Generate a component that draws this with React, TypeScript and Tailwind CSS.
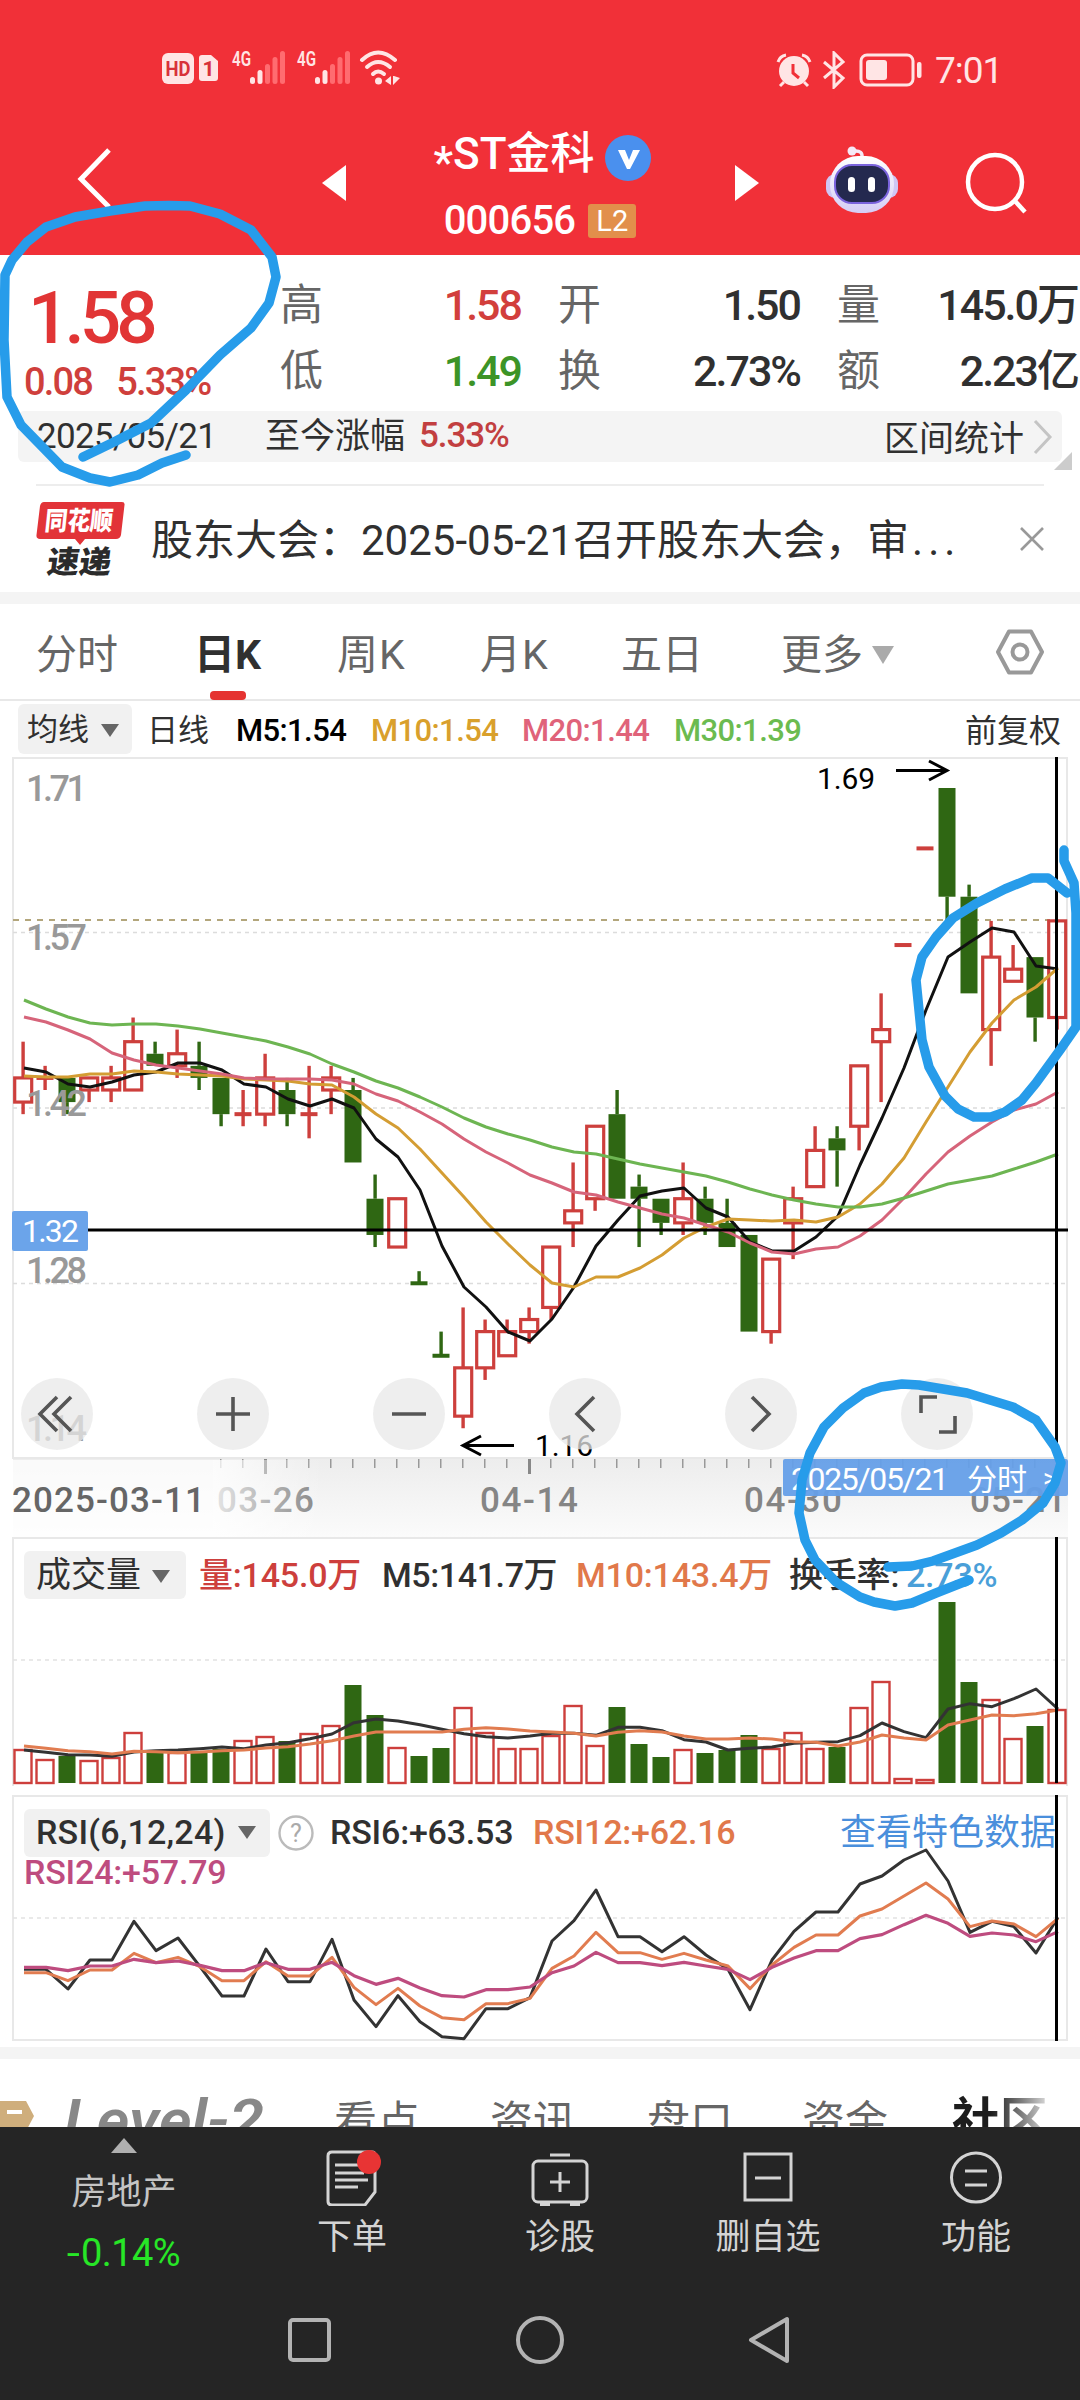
import React from "react";

const RED = "#cd3f3c";
const GREEN = "#2f6713";

const xAt = (i: number) => 23 + 22 * i;
const yAt = (cents: number) => 788 + (169 - cents) * 12.08;

/* [color, body top, body bottom, high, low] in cents */
const CANDLES: [string, number, number, number, number][] = [
  ["r", 145, 143, 148, 142],
  ["r", 145, 145, 146, 144],
  ["g", 145, 143, 145, 142],
  ["r", 145, 144, 145, 143],
  ["r", 145, 144, 146, 143],
  ["r", 148, 144, 150, 144],
  ["g", 147, 146, 148, 146],
  ["r", 147, 146, 149, 145],
  ["g", 146, 145, 148, 144],
  ["g", 145, 142, 145, 141],
  ["r", 142, 142, 144, 141],
  ["r", 145, 142, 147, 141],
  ["g", 144, 142, 145, 141],
  ["r", 142, 142, 146, 140],
  ["r", 145, 144, 146, 142],
  ["g", 144, 138, 145, 138],
  ["g", 135, 132, 137, 131],
  ["r", 135, 131, 135, 131],
  ["g", 128, 128, 129, 128],
  ["g", 122, 122, 124, 122],
  ["r", 121, 117, 126, 116],
  ["r", 124, 121, 125, 120],
  ["r", 124, 122, 125, 122],
  ["r", 125, 124, 126, 123],
  ["r", 131, 126, 131, 125],
  ["r", 134, 133, 138, 131],
  ["r", 141, 135, 141, 134],
  ["g", 142, 135, 144, 135],
  ["g", 136, 135, 137, 131],
  ["g", 135, 133, 135, 132],
  ["r", 135, 133, 138, 132],
  ["g", 135, 133, 136, 132],
  ["g", 133, 131, 135, 131],
  ["g", 132, 124, 132, 124],
  ["r", 130, 124, 130, 123],
  ["r", 135, 133, 136, 130],
  ["r", 139, 136, 141, 136],
  ["g", 140, 139, 141, 136],
  ["r", 146, 141, 146, 139],
  ["r", 149, 148, 152, 143],
  ["r", 156, 156, 156, 156],
  ["r", 164, 164, 164, 164],
  ["g", 169, 160, 169, 158],
  ["g", 160, 152, 161, 152],
  ["r", 155, 149, 158, 146],
  ["r", 154, 153, 156, 153],
  ["g", 155, 150, 155, 148],
  ["r", 158, 150, 158, 149],
];

const M5 = [1068, 1072, 1084, 1087, 1082, 1075, 1072, 1063, 1063, 1070, 1084, 1087, 1099, 1106, 1099, 1108, 1139, 1157, 1190, 1246, 1287, 1307, 1332, 1341, 1319, 1287, 1246, 1220, 1196, 1191, 1188, 1208, 1217, 1242, 1251, 1251, 1237, 1216, 1165, 1118, 1068, 1010, 957, 942, 928, 932, 966, 969];
const M10 = [1076, 1077, 1077, 1074, 1074, 1071, 1072, 1074, 1075, 1076, 1079, 1080, 1081, 1084, 1085, 1097, 1114, 1128, 1149, 1173, 1197, 1222, 1244, 1265, 1283, 1287, 1277, 1277, 1268, 1255, 1238, 1227, 1219, 1220, 1221, 1220, 1222, 1217, 1204, 1184, 1158, 1122, 1087, 1052, 1023, 1000, 987, 968];
const M20 = [1017, 1022, 1030, 1039, 1053, 1060, 1065, 1068, 1071, 1074, 1078, 1079, 1079, 1079, 1080, 1084, 1094, 1101, 1112, 1124, 1139, 1152, 1163, 1175, 1183, 1192, 1195, 1202, 1208, 1214, 1218, 1225, 1232, 1243, 1252, 1254, 1249, 1247, 1236, 1220, 1198, 1174, 1152, 1136, 1122, 1110, 1104, 1092];
const M30 = [1000, 1009, 1017, 1023, 1025, 1024, 1024, 1026, 1029, 1033, 1037, 1041, 1047, 1054, 1064, 1072, 1081, 1088, 1097, 1107, 1118, 1127, 1134, 1140, 1147, 1152, 1154, 1159, 1164, 1168, 1172, 1176, 1182, 1189, 1195, 1200, 1204, 1207, 1207, 1204, 1198, 1191, 1184, 1180, 1176, 1169, 1162, 1154];

const VOL = [1749, 1759, 1756, 1760, 1757, 1732, 1753, 1752, 1752, 1749, 1740, 1736, 1741, 1733, 1725, 1685, 1715, 1747, 1756, 1748, 1707, 1732, 1748, 1748, 1735, 1705, 1745, 1707, 1744, 1757, 1749, 1753, 1750, 1735, 1748, 1732, 1748, 1747, 1707, 1681, 1778, 1779, 1602, 1682, 1699, 1738, 1726, 1709];
const V5 = [690, 697, 704, 705, 709, 696, 692, 690, 686, 681, 686, 675, 668, 656, 642, 608, 597, 603, 614, 628, 641, 650, 654, 648, 640, 640, 646, 622, 622, 632, 659, 666, 690, 685, 681, 670, 667, 665, 647, 609, 635, 653, 567, 551, 560, 536, 507, 567].map((v) => 1520 + v / 3);
const V10 = [678, 685, 692, 695, 702, 694, 695, 698, 696, 692, 690, 684, 680, 672, 662, 648, 636, 636, 636, 636, 628, 623, 627, 633, 636, 640, 648, 637, 632, 636, 648, 657, 657, 654, 657, 665, 667, 678, 666, 645, 654, 660, 615, 600, 585, 587, 581, 570].map((v) => 1520 + v / 3);

const RSI6 = [568, 568, 627, 540, 540, 424, 512, 474, 560, 648, 648, 507, 605, 605, 478, 660, 740, 647, 725, 770, 776, 686, 686, 653, 483, 422, 330, 470, 470, 515, 470, 525, 568, 689, 540, 454, 396, 396, 312, 288, 240, 210, 303, 457, 424, 440, 519, 412].map((v) => 1780 + v / 3);
const RSI12 = [578, 578, 602, 570, 570, 520, 548, 532, 560, 602, 602, 545, 588, 588, 532, 622, 674, 625, 678, 713, 719, 671, 671, 655, 565, 528, 457, 518, 518, 538, 520, 540, 558, 626, 555, 502, 465, 465, 408, 387, 348, 309, 357, 440, 423, 432, 470, 415].map((v) => 1780 + v / 3);
const RSI24 = [562, 562, 572, 558, 558, 538, 548, 543, 556, 572, 572, 548, 568, 568, 547, 587, 613, 595, 624, 647, 651, 629, 629, 621, 578, 558, 517, 548, 548, 557, 547, 558, 568, 599, 562, 534, 512, 512, 476, 464, 434, 406, 430, 469, 459, 465, 485, 455].map((v) => 1780 + v / 3);

const Line = ({ data, color, width = 3 }: { data: number[]; color: string; width?: number }) => (
  <polyline
    points={data.map((y, i) => `${xAt(i) + 1},${y}`).join(" ")}
    fill="none"
    stroke={color}
    strokeWidth={width}
    strokeLinejoin="round"
  />
);

const Caret = ({ w = 18, h = 13, color = "#666" }: { w?: number; h?: number; color?: string }) => (
  <svg width={w} height={h} viewBox="0 0 18 13" preserveAspectRatio="none" className="shrink-0">
    <path d="M0 0H18L9 13Z" fill={color} />
  </svg>
);

/* --------------------------------------
   Status bar + title
---------------------------------------*/
const Signal = () => (
  <svg width="54" height="36" viewBox="0 0 54 36" className="shrink-0 overflow-visible">
    <text x="0" y="16" fontSize="21" fontWeight="600" textLength="19" lengthAdjust="spacingAndGlyphs" fill="#ffe5e5">
      4G
    </text>
    <rect x="18" y="27" width="5" height="7" rx="2.5" fill="#ffe5e5" />
    <rect x="25.5" y="20" width="5" height="14" rx="2.5" fill="#ffe5e5" />
    <rect x="33" y="14" width="5" height="20" rx="2.5" fill="#ff6c70" />
    <rect x="40.5" y="7" width="5" height="27" rx="2.5" fill="#ff6c70" />
    <rect x="48" y="1" width="5" height="33" rx="2.5" fill="#ff6c70" />
  </svg>
);

const StatusBar = () => (
  <div className="h-[135px] pl-[162px] pt-[50px] flex items-start">
    <svg width="60" height="36" viewBox="0 0 60 36" className="shrink-0">
      <rect x="0" y="3" width="32" height="31" rx="6" fill="#ffe5e5" />
      <text x="3.5" y="26" fontSize="21" fontWeight="700" textLength="25" lengthAdjust="spacingAndGlyphs" fill="#d8323a">
        HD
      </text>
      <path d="M40 5H49L56 11V28Q56 31 53 31H40Q37 31 37 28V8Q37 5 40 5Z" fill="#ffe5e5" />
      <text x="40.5" y="26" fontSize="21" fontWeight="700" fill="#d8323a">
        1
      </text>
    </svg>
    <div className="ml-[10px] flex gap-[11px]">
      <Signal />
      <Signal />
    </div>
    <svg width="44" height="36" viewBox="0 0 44 36" className="ml-[8px] shrink-0" fill="none" stroke="#ffe5e5" strokeWidth="4" strokeLinecap="round">
      <path d="M3 10Q19 -5 36 10" />
      <path d="M8 17Q19 7 31 17" />
      <path d="M14 24Q19 19 25 24" />
      <circle cx="19.5" cy="31" r="3.5" fill="#ffe5e5" stroke="none" />
      <path d="M32 26V35L26 31ZM34 26H35L41 28L34 35Z" fill="#ffe5e5" stroke="none" />
    </svg>
    <div className="ml-auto mr-[79px] flex items-center">
      <svg width="36" height="36" viewBox="0 0 36 36" fill="none" stroke="#ffe5e5" strokeWidth="3">
        <circle cx="18" cy="19" r="15" fill="#ffe5e5" stroke="none" />
        <path d="M2 10Q4 4 10 3M34 10Q32 4 26 3M8 30L4 34M28 30L32 34" />
        <path d="M17 12V21L23 26" stroke="#f13038" />
      </svg>
      <svg width="24" height="38" viewBox="0 0 24 38" className="ml-[10px]" fill="none" stroke="#ffe5e5" strokeWidth="3">
        <path d="M2 11L21 27L12 36V2L21 11L2 27" />
      </svg>
      <svg width="64" height="36" viewBox="0 0 64 36" className="ml-[13px]">
        <rect x="2" y="3" width="52" height="30" rx="6" fill="none" stroke="#ffe5e5" strokeWidth="3" />
        <rect x="7" y="8" width="21" height="20" rx="3" fill="#ffe5e5" />
        <rect x="58" y="10" width="4.5" height="16" rx="2" fill="#ffe5e5" />
      </svg>
      <span className="ml-[12px] mt-[3px] w-[66px] whitespace-nowrap text-[37px] leading-[36px] tracking-[-1px] text-[#ffe5e5]">7:01</span>
    </div>
  </div>
);

const Robot = () => (
  <svg width="74" height="70" viewBox="0 0 74 70">
    <defs>
      <linearGradient id="bot" x1="0" y1="0" x2="0" y2="1">
        <stop offset="0" stopColor="#fff" />
        <stop offset="1" stopColor="#d5cdf6" />
      </linearGradient>
    </defs>
    <path d="M37 13Q38 5 29 6" stroke="#f5e9f6" strokeWidth="3.5" fill="none" />
    <circle cx="27" cy="6" r="4.5" fill="#f5e9f6" />
    <rect x="1" y="29" width="72" height="24" rx="9" fill="#cfc6f5" />
    <rect x="5" y="11" width="64" height="57" rx="28" fill="url(#bot)" />
    <rect x="10" y="20" width="54" height="38" rx="17" fill="#24294f" stroke="#7a63dd" strokeWidth="2" />
    <rect x="23" y="32" width="7" height="15" rx="3.5" fill="#fff" />
    <rect x="43" y="32" width="7" height="15" rx="3.5" fill="#fff" />
  </svg>
);

const TitleBar = () => (
  <div className="h-[120px] flex items-start text-white">
    <svg width="36" height="60" viewBox="0 0 36 60" className="ml-[76px] mt-[13px] shrink-0" fill="none" stroke="#fff" strokeWidth="5">
      <path d="M33 2L5 31L33 59" />
    </svg>
    <svg width="24" height="36" viewBox="0 0 24 36" className="ml-[210px] mt-[30px] shrink-0">
      <path d="M24 0V36L0 18Z" fill="#fff" />
    </svg>
    <div className="ml-[68px] w-[260px] shrink-0 flex flex-col items-center">
      <div className="h-[46px] mr-[3px] flex items-center gap-[11px]">
        <span className="flex whitespace-nowrap text-[44px] leading-[46px] font-medium">
          <span className="pt-[9px]">*</span>ST金科
        </span>
        <svg width="46" height="46" viewBox="0 0 46 46" className="shrink-0">
          <circle cx="23" cy="23" r="23" fill="#4a90ee" />
          <path d="M13 15H20L24 25L28 15H35L25 34H22Z" fill="#fff" />
        </svg>
      </div>
      <div className="mt-[17px] mr-[8px] h-[46px] flex items-center gap-[13px]">
        <span className="text-[40px] leading-[46px] font-medium tracking-[-0.8px]">000656</span>
        <span className="w-[48px] h-[34px] rounded-[3px] bg-[#e28f4b] text-center text-[29px] leading-[35px]">L2</span>
      </div>
    </div>
    <svg width="24" height="36" viewBox="0 0 24 36" className="ml-[61px] mt-[30px] shrink-0">
      <path d="M0 0V36L24 18Z" fill="#fff" />
    </svg>
    <div className="ml-[66px] mt-[10px] shrink-0">
      <Robot />
    </div>
    <svg width="62" height="64" viewBox="0 0 62 64" className="ml-[66px] mt-[16px] shrink-0" fill="none" stroke="#fff" strokeWidth="4.5">
      <circle cx="30" cy="31" r="27" />
      <path d="M50 50L60 61" />
    </svg>
  </div>
);

/* --------------------------------------
   Quote numbers
---------------------------------------*/
const Cell = ({ label, value, color = "text-[#303030]" }: { label: string; value: string; color?: string }) => (
  <div className="flex items-center justify-between h-[66px] text-[43px]">
    <span className="text-[#666]">{label}</span>
    <span className={`font-medium tracking-[-2px] whitespace-nowrap ${color}`}>{value}</span>
  </div>
);

const Quote = () => (
  <div className="h-[156px] flex">
    <div className="w-[280px] pt-[28px] shrink-0">
      <div className="pl-[28px] h-[70px] text-[73px] leading-[70px] font-medium tracking-[-5px] text-[#e13535]">1.58</div>
      <div className="pl-[24px] mt-[7px] h-[44px] flex gap-[24px] text-[38px] leading-[44px] font-medium tracking-[-1.8px] text-[#cf3f3c]">
        <span>0.08</span>
        <span>5.33%</span>
      </div>
    </div>
    <div className="pt-[17px] flex gap-[37px] shrink-0">
      <div className="w-[241px]">
        <Cell label="高" value="1.58" color="text-[#d23f3c]" />
        <Cell label="低" value="1.49" color="text-[#3c9427]" />
      </div>
      <div className="w-[242px]">
        <Cell label="开" value="1.50" />
        <Cell label="换" value="2.73%" />
      </div>
      <div className="w-[241px]">
        <Cell label="量" value="145.0万" />
        <Cell label="额" value="2.23亿" />
      </div>
    </div>
  </div>
);

const RangeBar = () => (
  <div className="h-[73px] relative">
    <div className="mx-[18px] h-[51px] rounded-[6px] bg-[#f4f4f4] pl-[19px] pr-[9px] flex items-center text-[35px] text-[#303030]">
      <span className="w-[228px] pt-[2px] tracking-[-0.7px]">2025/05/21</span>
      <span className="pt-[2px]">至今涨幅</span>
      <span className="ml-[14px] font-medium text-[#c23f40] tracking-[-1.1px]">5.33%</span>
      <span className="ml-auto pt-[7px]">区间统计</span>
      <svg width="20" height="36" viewBox="0 0 20 36" className="ml-[9px]" fill="none" stroke="#c4c4c4" strokeWidth="3">
        <path d="M2 2L17 18L2 34" />
      </svg>
    </div>
    <svg width="18" height="18" viewBox="0 0 18 18" className="absolute right-[8px] top-[41px]">
      <path d="M18 0V18H0Z" fill="#ccc" />
    </svg>
  </div>
);

const News = () => (
  <div className="mx-[36px] h-[108px] border-t-2 border-[#ededed] flex items-start">
    <svg width="90" height="76" viewBox="0 0 90 76" className="mt-[16px] shrink-0">
      <path d="M8 0H86Q89 0 88.5 3L85 33Q84 37 80 37H49L44 43L39 37H4Q0 37 0.5 33L4 4Q5 0 8 0Z" fill="#e23338" />
      <text x="0" y="0" fontSize="26" fontWeight="900" fill="#fff" textLength="68" lengthAdjust="spacingAndGlyphs" transform="translate(8 28) skewX(-6)">
        同花顺
      </text>
      <text x="0" y="0" fontSize="31" fontWeight="900" fill="#2b2b2b" textLength="64" lengthAdjust="spacingAndGlyphs" transform="translate(10 71) skewX(-8)">
        速递
      </text>
    </svg>
    <span className="ml-[25px] mt-[30px] whitespace-nowrap text-[42px] leading-[50px] text-[#303030]">
      股东大会：2025-05-21召开股东大会，审<span className="tracking-[5px] pl-[3px]">...</span>
    </span>
    <svg width="24" height="24" viewBox="0 0 24 24" className="ml-auto mt-[41px] shrink-0" stroke="#999" strokeWidth="2.6">
      <path d="M1 1L23 23M23 1L1 23" />
    </svg>
  </div>
);

const Tabs = () => (
  <div className="h-[97px] border-b-2 border-[#e8e8e8] pl-[36px] flex items-start text-[41px] leading-[50px] text-[#666]">
    <div className="w-[158px] pt-[26px]">分时</div>
    <div className="w-[143px] pt-[26px] font-bold text-[#303030]">
      日K
      <div className="mt-[11px] ml-[16px] w-[36px] h-[9px] rounded-[4px] bg-[#e53331]" />
    </div>
    <div className="w-[143px] pt-[26px] tracking-[1px]">周K</div>
    <div className="w-[141px] pt-[26px] tracking-[1px]">月K</div>
    <div className="w-[160px] pt-[26px]">五日</div>
    <div className="w-[215px] pt-[26px] flex items-center gap-[9px]">
      更多
      <Caret w={22} h={18} color="#aaa" />
    </div>
    <svg width="48" height="48" viewBox="0 0 48 48" className="mt-[24px]" fill="none" stroke="#999" strokeWidth="4">
      <path d="M13 3.5H35L46 24L35 44.5H13L2 24Z" strokeLinejoin="round" />
      <circle cx="24" cy="24" r="7.5" />
    </svg>
  </div>
);

const MaRow = () => (
  <div className="h-[56px] pl-[18px] pr-[19px] flex items-center text-[31px] text-[#303030] whitespace-nowrap">
    <div className="w-[114px] h-[50px] rounded-[6px] bg-[#f1f1f1] flex items-center pl-[9px] pt-[2px] gap-[12px]">
      均线
      <Caret />
    </div>
    <span className="ml-[15px] w-[89px] pt-[4px]">日线</span>
    <div className="flex pt-[4px] font-medium tracking-[-0.6px]">
      <span className="w-[135px] text-black">M5:1.54</span>
      <span className="w-[151px] text-[#d9a02c]">M10:1.54</span>
      <span className="w-[152px] text-[#e0637a]">M20:1.44</span>
      <span className="text-[#6bbb50]">M30:1.39</span>
    </div>
    <span className="ml-auto pt-[4px] text-[32px]">前复权</span>
  </div>
);

/* --------------------------------------
   Candles
---------------------------------------*/
const Candle = ({ i }: { i: number }) => {
  const [kind, top, bottom, high, low] = CANDLES[i];
  const x = xAt(i);
  const color = kind === "r" ? RED : GREEN;
  const t = yAt(top);
  const b = yAt(bottom);
  if (top === bottom) {
    return (
      <g fill={color}>
        {high !== low && <rect x={x - 1.6} y={yAt(high)} width="3.4" height={yAt(low) - yAt(high)} />}
        <rect x={x - 8.5} y={t - 2} width="17" height="4" />
      </g>
    );
  }
  return (
    <g>
      {high > top && <rect x={x - 1.6} y={yAt(high)} width="3.4" height={t - yAt(high)} fill={color} />}
      {low < bottom && <rect x={x - 1.6} y={b} width="3.4" height={yAt(low) - b} fill={color} />}
      {kind === "r" ? (
        <rect x={x - 8.3} y={t} width="17" height={b - t} fill="none" stroke={color} strokeWidth="3.2" />
      ) : (
        <rect x={x - 8.5} y={t} width="17" height={b - t} fill={color} />
      )}
    </g>
  );
};

const BUTTONS = [
  "M37 -17L20 0L37 17M51 -17L34 0L51 17",
  "M20 0H54M37 -17V17",
  "M20 0H54",
  "M46 -17L29 0L46 17",
  "M28 -17L45 0L28 17",
  "M21 -1V-17H37M39 18H55V2",
];

const PriceChart = () => (
  <svg width="1080" height="780" viewBox="0 757 1080 780" className="block">
    <defs>
      <linearGradient id="axis" x1="0" y1="0" x2="0" y2="1">
        <stop offset="0" stopColor="#ededed" />
        <stop offset="1" stopColor="#fbfbfb" />
      </linearGradient>
      <linearGradient id="fade" x1="0" y1="0" x2="1" y2="0">
        <stop offset="0" stopColor="#fff" stopOpacity="1" />
        <stop offset="1" stopColor="#fff" stopOpacity="0" />
      </linearGradient>
    </defs>
    <rect x="13" y="758" width="1054" height="700" fill="none" stroke="#e8e8e8" strokeWidth="2" />
    <g stroke="#dcdcdc" strokeWidth="1.5" strokeDasharray="4 4">
      <path d="M13 932.5H1066M13 1108H1066M13 1283.5H1066" />
    </g>
    <path d="M13 920H1050" stroke="#b3a67c" strokeWidth="2" strokeDasharray="6 6" />
    {CANDLES.map((_, i) => (
      <Candle key={i} i={i} />
    ))}
    <Line data={M5} color="#111" />
    <Line data={M10} color="#d49d33" />
    <Line data={M20} color="#d6647a" />
    <Line data={M30} color="#6db552" />
    <g fontSize="36" fontWeight="500" fill="#999">
      <text x="26" y="801" textLength="61">1.71</text>
      <text x="26" y="950" textLength="61">1.57</text>
      <text x="26" y="1116" textLength="61">1.42</text>
      <text x="26" y="1283" textLength="61">1.28</text>
      <text x="26" y="1441" textLength="61">1.14</text>
    </g>
    <g stroke="#000" strokeWidth="3" fill="none">
      <path d="M896 770.5H946M929 761L947 770.5L929 780" />
      <path d="M514 1445.5H464M481 1436L463 1445.5L481 1455" />
    </g>
    <text x="817" y="789" fontSize="30" textLength="58">1.69</text>
    <text x="535" y="1456" fontSize="30" textLength="58">1.16</text>
    {BUTTONS.map((d, i) => (
      <g key={i} transform={`translate(${20 + 176 * i} 1414)`}>
        <circle cx="37" cy="0" r="36" fill="#e8e8e8" fillOpacity="0.75" />
        <path d={d} fill="none" stroke="#555" strokeWidth="3.6" />
      </g>
    ))}

    {/* date axis */}
    <rect x="13" y="1459" width="1055" height="78" fill="url(#axis)" />
    {Array.from({ length: 38 }, (_, k) => k + 9).map((i) => (
      <rect key={i} x={xAt(i) - 1} y="1459" width="1.5" height="9" fill="#999" />
    ))}
    <rect x="264" y="1459" width="3" height="15" fill="#888" />
    <rect x="528" y="1459" width="3" height="15" fill="#888" />
    <g fontSize="35" fontWeight="500" fill="#858585">
      <text x="217" y="1512" textLength="97">03-26</text>
      <text x="480" y="1512" textLength="98">04-14</text>
      <text x="744" y="1512" textLength="98">04-30</text>
      <text x="970" y="1512" textLength="96">05-21</text>
    </g>
    <rect x="13" y="1460" width="200" height="77" fill="#fff" fillOpacity="0.7" />
    <rect x="213" y="1460" width="110" height="77" fill="url(#fade)" fillOpacity="0.8" />
    <text x="12" y="1512" fontSize="35" fontWeight="500" fill="#666" textLength="193">2025-03-11</text>

    {/* crosshair */}
    <path d="M88 1230H1068M1056.5 757V1459" stroke="#000" strokeWidth="3" />
    <rect x="12" y="1211" width="76" height="40" rx="2" fill="#6ba4ea" />
    <text x="22" y="1242" fontSize="32" fill="#fff" textLength="57">1.32</text>
    <rect x="783" y="1459" width="285" height="37" rx="2" fill="#659fe8" fillOpacity="0.95" />
    <g fontSize="32" fill="#fff">
      <text x="791" y="1490" textLength="158">2025/05/21</text>
      <text x="967" y="1490" fontSize="30">分时</text>
      <text x="1043" y="1487" fontSize="26">&gt;</text>
    </g>
  </svg>
);

const VolumePanel = () => (
  <div className="relative h-[258px]">
    <svg width="1080" height="258" viewBox="0 1537 1080 258" className="absolute inset-0">
      <path d="M13 1786V1538H1067V1786" fill="none" stroke="#e8e8e8" strokeWidth="2" />
      <path d="M13 1660H1066" stroke="#e2e2e2" strokeWidth="1.5" strokeDasharray="4 4" />
      {VOL.map((y, i) =>
        CANDLES[i][0] === "r" ? (
          <rect key={i} x={xAt(i) - 8.5} y={y + 1} width="17" height={Math.max(1782 - y, 2)} fill="none" stroke={RED} strokeWidth="2.4" />
        ) : (
          <rect key={i} x={xAt(i) - 8.5} y={y} width="17" height={1783 - y} fill={GREEN} />
        ),
      )}
      <Line data={V5} color="#333" />
      <Line data={V10} color="#e17c50" />
      <path d="M1056.5 1537V1783" stroke="#000" strokeWidth="3" />
    </svg>
    <div className="relative pt-[12px] pl-[24px] flex items-center text-[34px] text-[#303030] whitespace-nowrap">
      <div className="w-[162px] h-[48px] rounded-[6px] bg-[#f1f1f1] flex items-center pl-[12px] pt-[2px] gap-[11px] text-[35px]">
        成交量
        <Caret />
      </div>
      <div className="flex pt-[1px] font-medium tracking-[-0.2px]">
        <span className="ml-[13px] w-[183px] text-[#cd3f3c]">量:145.0万</span>
        <span className="w-[194px] tracking-[-0.4px]">M5:141.7万</span>
        <span className="w-[213px] text-[#e1784a]">M10:143.4万</span>
        <span className="w-[117px]">换手率:</span>
        <span className="text-[#4a9fd8]">2.73%</span>
      </div>
    </div>
  </div>
);

const RsiPanel = () => (
  <div className="relative h-[252px]">
    <svg width="1080" height="252" viewBox="0 1795 1080 252" className="absolute inset-0">
      <rect x="13" y="1796" width="1054" height="244" fill="none" stroke="#e8e8e8" strokeWidth="2" />
      <path d="M13 1918H1066" stroke="#e2e2e2" strokeWidth="1.5" strokeDasharray="4 4" />
      <Line data={RSI6} color="#333" />
      <Line data={RSI12} color="#e17c50" />
      <Line data={RSI24} color="#be4c7f" width={3.2} />
    </svg>
    <div className="relative pt-[12px] pl-[24px] pr-[24px] flex items-center text-[34px] text-[#303030] whitespace-nowrap">
      <div className="w-[246px] h-[48px] rounded-[6px] bg-[#f1f1f1] flex items-center justify-between pl-[12px] pr-[14px] text-[34px] font-medium tracking-[0.2px]">
        RSI(6,12,24)
        <Caret />
      </div>
      <svg width="36" height="36" viewBox="0 0 36 36" className="ml-[8px] shrink-0">
        <circle cx="18" cy="18" r="16.5" fill="none" stroke="#bbb" strokeWidth="2.4" />
        <text x="18" y="27" fontSize="25" textAnchor="middle" fill="#aaa">?</text>
      </svg>
      <span className="ml-[16px] w-[203px] font-medium tracking-[-0.2px]">RSI6:+63.53</span>
      <span className="font-medium tracking-[-0.2px] text-[#e1784a]">RSI12:+62.16</span>
      <span className="ml-auto text-[36px] leading-[40px] text-[#4a8fdc]">查看特色数据</span>
    </div>
    <div className="relative pl-[24px] -mt-[7px] h-[40px] text-[34px] leading-[42px] font-medium tracking-[-0.2px] text-[#be4c7f]">RSI24:+57.79</div>
    <svg width="4" height="246" viewBox="0 0 4 246" className="absolute left-[1055px] top-0">
      <rect width="3" height="246" fill="#000" />
    </svg>
  </div>
);

const MoreTabs = () => (
  <div className="h-[68px] overflow-hidden flex items-start text-[43px] leading-[52px] text-[#666] whitespace-nowrap">
    <svg width="36" height="42" viewBox="0 0 36 42" className="mt-[42px] shrink-0">
      <path d="M-10 0H26L34 15L24 34H-10Z" fill="#cfae7c" />
      <path d="M7 11H22" stroke="#fff" strokeWidth="4" />
    </svg>
    <svg width="206" height="68" viewBox="36 2059 206 68" className="ml-[28px] mr-[64px] shrink-0 overflow-visible">
      <text x="36" y="2140" fontSize="57" fontWeight="600" fontStyle="italic" fill="#888" textLength="200" lengthAdjust="spacingAndGlyphs">
        Level-2
      </text>
    </svg>
    <span className="mt-[37px] w-[156px] shrink-0">看点</span>
    <span className="mt-[37px] w-[157px] shrink-0">资讯</span>
    <span className="mt-[37px] w-[155px] shrink-0">盘口</span>
    <span className="mt-[37px] w-[150px] shrink-0">资金</span>
    <span className="mt-[36px] shrink-0 text-[48px] font-bold bg-linear-to-r from-[#1d1d1d] from-40% to-[#ddd] bg-clip-text text-transparent">社区</span>
  </div>
);

/* --------------------------------------
   Bottom bars
---------------------------------------*/
const FooterItem = ({ label, children }: { label: string; children: React.ReactNode }) => (
  <div className="w-[120px] flex flex-col items-center">
    <svg width="60" height="58" viewBox="0 0 60 58" fill="none" stroke="#d4d4d4" strokeWidth="3">
      {children}
    </svg>
    <span className="mt-[10px] text-[35px] leading-[44px]">{label}</span>
  </div>
);

const Footer = () => (
  <div className="h-[273px] bg-[#252525] text-[#d4d4d4]">
    <div className="h-[160px] flex items-start">
      <div className="ml-[39px] w-[170px] pt-[11px] flex flex-col items-center">
        <svg width="26" height="15" viewBox="0 0 26 15">
          <path d="M13 0L26 15H0Z" fill="#b0b0b0" />
        </svg>
        <span className="mt-[18px] text-[35px] leading-[44px] text-[#c4c4c4]">房地产</span>
        <span className="mt-[16px] flex items-center text-[38px] leading-[44px] tracking-[-0.6px] text-[#27e627]">
          <span className="scale-x-125 mr-[3px]">-</span>0.14%
        </span>
      </div>
      <div className="ml-[83px] pt-[21px] flex gap-[88px]">
        <FooterItem label="下单">
          <path d="M10 4H50Q53 4 53 7V44L43 57H10Q6 57 6 53V8Q6 4 10 4Z" />
          <path d="M13 17H36M13 25H42M13 32H46M13 39H36" />
          <circle cx="47" cy="14" r="12" fill="#e83434" stroke="none" />
        </FooterItem>
        <FooterItem label="诊股">
          <path d="M20 7H40" />
          <rect x="3" y="13" width="54" height="41" rx="5" />
          <path d="M30 24V44M20 34H40" />
          <path d="M10 56H20M40 56H50" strokeWidth="4" />
        </FooterItem>
        <FooterItem label="删自选">
          <rect x="7" y="6" width="46" height="46" />
          <path d="M17 30H43" />
        </FooterItem>
        <FooterItem label="功能">
          <circle cx="30" cy="29.5" r="24.5" />
          <path d="M19 23H41M19 37H41" />
        </FooterItem>
      </div>
    </div>
    <div className="h-[113px] pt-[27px] flex">
      <svg width="48" height="52" viewBox="0 0 48 52" className="ml-[286px]" fill="none" stroke="#b3b3b3" strokeWidth="4">
        <rect x="4" y="6" width="39" height="40" rx="3" />
      </svg>
      <svg width="52" height="52" viewBox="0 0 52 52" className="ml-[180px]" fill="none" stroke="#b3b3b3" strokeWidth="4">
        <circle cx="26" cy="26" r="22" />
      </svg>
      <svg width="48" height="52" viewBox="0 0 48 52" className="ml-[180px]" fill="none" stroke="#b3b3b3" strokeWidth="4">
        <path d="M41 5V47L5 26Z" strokeLinejoin="round" />
      </svg>
    </div>
  </div>
);

/* Hand drawn marks over the page */
const Marks = () => (
  <svg
    width="1080"
    height="2400"
    viewBox="0 0 1080 2400"
    className="absolute inset-0 pointer-events-none"
    fill="none"
    stroke="#279cea"
    strokeWidth="9.5"
    strokeLinecap="round"
    strokeLinejoin="round"
  >
    <path d="M83 457L114 442L151 423L186 390L220 355L251 328L269 303L276 277L272 257L251 230L220 214L190 206L169 205.5L145 206L110 211L75 217L46 227L27 242L12 260L5 275L4 340L7 397L21 425L62 467L90 478L110 482L138 475L162 463L186 455" />
    <path d="M1064 850V861L1074 883L1076 913V1027L1060 1050L1036 1083L1022 1100L1005 1112L991 1117H974L958 1109L945 1096L929 1067L922 1040L916 980L922 957L936 937L953 918L977 903L1005 889L1032 878H1048L1067 893" />
    <path d="M888 1567L912 1566L933 1561L977 1545L1001 1533L1022 1520L1043 1503L1055 1483L1061 1463L1055 1447L1036 1420L1013 1407L967 1393L919 1385L902 1384L881 1387L864 1393L843 1408L824 1427L810 1453L802 1480L799 1513L805 1540L815 1560L836 1582L860 1597L874 1602L895 1606L912 1603L936 1593L969 1580" />
  </svg>
);

export default function App() {
  return (
    <div className="relative w-[1080px] h-[2400px] overflow-hidden bg-white font-[Roboto,'Noto_Sans_CJK_SC',sans-serif]">
      <div className="h-[255px] bg-[#f13038]">
        <StatusBar />
        <TitleBar />
      </div>
      <Quote />
      <RangeBar />
      <News />
      <div className="h-[12px] bg-[#f4f4f4]" />
      <Tabs />
      <MaRow />
      <PriceChart />
      <VolumePanel />
      <RsiPanel />
      <div className="h-[12px] bg-[#f4f4f4]" />
      <MoreTabs />
      <Footer />
      <Marks />
    </div>
  );
}
